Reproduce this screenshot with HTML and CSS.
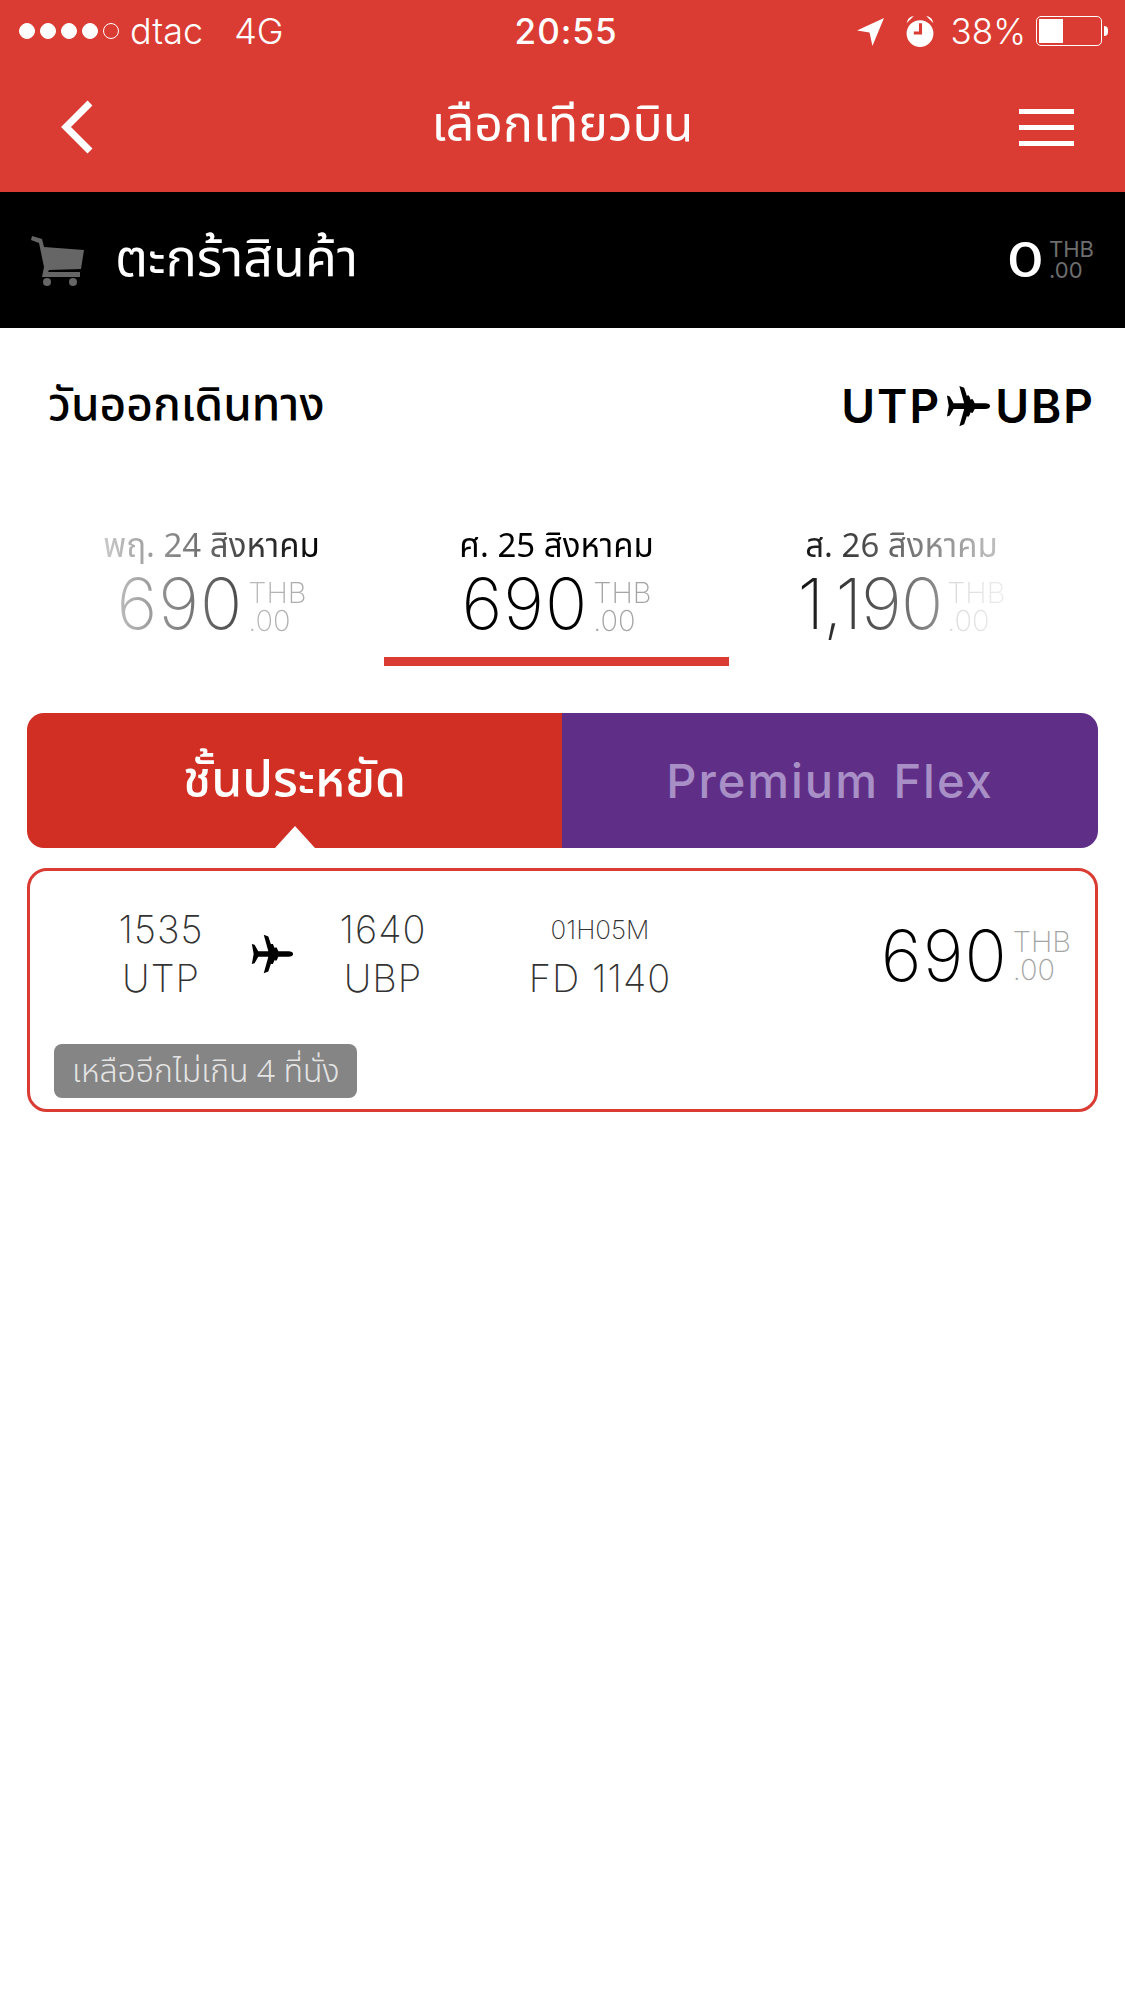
FILE: index.html
```html
<!DOCTYPE html>
<html lang="th">
<head>
    <meta charset="UTF-8">
    <meta name="viewport" content="width=device-width, initial-scale=1.0">
    <title>เลือกเทียวบิน</title>
    <link rel="stylesheet" href="styles.css">
</head>
<body>
    <header class="top">
        <div class="status">
            <div class="status-left">
                <span class="dots"><i></i><i></i><i></i><i></i><i class="off"></i></span>
                <span class="carrier">dtac</span>
                <span class="net">4G</span>
            </div>
            <div class="clock">20:55</div>
            <div class="status-right">
                <svg class="loc" viewBox="0 0 28 30"><path d="M28 1 L0 14 L13 16 L16 30 Z" fill="#fff"/></svg>
                <svg class="alarm" viewBox="0 0 30 32">
                    <circle cx="15" cy="18" r="13" fill="#fff"/>
                    <path d="M2 8 Q3 2 9 1 Z M28 8 Q27 2 21 1 Z" fill="#fff"/>
                    <path d="M14 8 h3 v11 h-8 v-3 h5 Z" fill="#da3c34"/>
                </svg>
                <span class="pct">38%</span>
                <span class="battery"><span class="battery-fill"></span></span>
                <span class="battery-nub"></span>
            </div>
        </div>
        <nav class="nav">
            <svg class="back" viewBox="0 0 34 54"><path d="M30 3 L6 27 L30 51" fill="none" stroke="#fff" stroke-width="7"/></svg>
            <h1 class="nav-title">เลือกเทียวบิน</h1>
            <div class="burger"><i></i><i></i><i></i></div>
        </nav>
    </header>

    <section class="cart">
        <svg class="cart-icon" viewBox="0 0 54 52">
            <path d="M1 2 L11 5 L13 13 L53 16 L50 35 L18 36 L17 38 L49 38 L49 43 L11 43 L13 33 L8 9 L0 6 Z" fill="#666"/>
            <circle cx="16" cy="48" r="4" fill="#666"/>
            <circle cx="42" cy="48" r="4" fill="#666"/>
        </svg>
        <div class="cart-title">ตะกร้าสินค้า</div>
        <div class="price price-cart">
            <span class="amount">0</span>
            <span class="cents"><span>THB</span><span>.00</span></span>
        </div>
    </section>

    <section class="route">
        <div class="route-title">วันออกเดินทาง</div>
        <div class="route-codes">
            <span>UTP</span>
            <svg class="plane plane-big" viewBox="0 0 48 48"><use href="#plane"/></svg>
            <span>UBP</span>
        </div>
    </section>

    <section class="days">
        <div class="day">
            <div class="day-label">พฤ. 24 สิงหาคม</div>
            <div class="price"><span class="amount">690</span><span class="cents"><span>THB</span><span>.00</span></span></div>
        </div>
        <div class="day day-active">
            <div class="day-label">ศ. 25 สิงหาคม</div>
            <div class="price"><span class="amount">690</span><span class="cents"><span>THB</span><span>.00</span></span></div>
        </div>
        <div class="day">
            <div class="day-label">ส. 26 สิงหาคม</div>
            <div class="price"><span class="amount amount-long">1,190</span><span class="cents"><span>THB</span><span>.00</span></span></div>
        </div>
    </section>

    <section class="tabs">
        <div class="tab tab-eco">ชั้นประหยัด<span class="notch"></span></div>
        <div class="tab tab-flex">Premium Flex</div>
    </section>

    <section class="flight">
        <div class="flight-row">
            <div class="col col-time"><div class="big">1535</div><div class="big">UTP</div></div>
            <svg class="plane plane-small" viewBox="0 0 48 48"><use href="#plane"/></svg>
            <div class="col col-time"><div class="big">1640</div><div class="big">UBP</div></div>
            <div class="col col-no"><div class="small">01H05M</div><div class="big">FD 1140</div></div>
            <div class="price price-flight"><span class="amount">690</span><span class="cents"><span>THB</span><span>.00</span></span></div>
        </div>
        <div class="seats">เหลืออีกไม่เกิน 4 ที่นั่ง</div>
    </section>

    <svg class="defs" width="0" height="0">
        <defs>
            <path id="plane" d="M47 24 C47 22 45 21 42 21 L31 21 L29 17 L27 17 L27 18 L25 13 L23 13 L23 14 L20 5 L15 3 L20 21 L9 21 L5 14 L2 13 L4 24 L2 35 L5 34 L9 27 L20 27 L15 45 L20 43 L23 34 L23 35 L25 35 L27 30 L27 31 L29 31 L31 27 L42 27 C45 27 47 26 47 24 Z"/>
        </defs>
    </svg>
</body>
</html>
```

FILE: styles.css
```css
body { margin: 0; background: #fff; color: #000; font-family: "Noto Sans", "Noto Sans Thai", "Noto Sans CJK SC", sans-serif; }
i { display: block; }

.top { height: 192px; background: #da3c34; color: #fff; }
.status { height: 62px; display: flex; align-items: center; justify-content: space-between; padding: 0 17px 0 19px; font-family: Inter, sans-serif; font-size: 35px; font-weight: 300; }
.status-left { display: flex; align-items: center; font-size: 36px; }
.dots { display: flex; gap: 5px; margin-right: 11px; }
.dots i { width: 16px; height: 16px; border-radius: 50%; background: #fff; border: 1px solid #fff; box-sizing: border-box; }
.dots i.off { background: none; }
.net { margin-left: 31px; }
.clock { margin-left: -8px; font-weight: 500; letter-spacing: 1px; }
.status-right { display: flex; align-items: center; }
.loc { width: 27px; height: 29px; margin-right: 20px; }
.alarm { width: 32px; height: 33px; margin-right: 15px; }
.pct { margin-right: 10px; }
.battery { width: 66px; height: 30px; box-sizing: border-box; border: 1px solid #fff; border-radius: 5px; padding: 2px; display: flex; }
.battery-fill { width: 24px; background: #fff; }
.battery-nub { width: 4px; height: 10px; margin-left: 2px; background: #fff; border-radius: 0 5px 5px 0; }

.nav { height: 130px; display: flex; align-items: center; padding: 0 51px 0 60px; }
.back { width: 34px; height: 54px; }
.nav-title { flex: 1; margin: -2px 0 0 12px; text-align: center; font-size: 50px; font-weight: 400; }
.burger { width: 55px; display: flex; flex-direction: column; gap: 11px; }
.burger i { height: 5px; background: #fff; }

.cart { height: 136px; background: #000; color: #fff; display: flex; align-items: center; padding: 0 31px; }
.cart-icon { width: 54px; height: 52px; margin-right: 30px; }
.cart-title { margin-top: -2px; font-size: 52px; flex: 1; }

.price { display: flex; justify-content: center; align-items: center; font-family: Inter, sans-serif; font-weight: 200; }
.amount { font-size: 70px; line-height: 70px; letter-spacing: 1px; }
.amount-long { letter-spacing: -1px; }
.cents { display: flex; flex-direction: column; margin-left: 5px; font-size: 29px; line-height: 28px; color: #a5a5a5; }
.price-cart .amount { font-size: 48px; font-weight: 500; line-height: 44px; letter-spacing: 0; transform: scaleX(1.2); transform-origin: right; }
.price-cart .cents { font-size: 22px; line-height: 21px; font-weight: 400; color: #6e6e6e; }

.route { display: flex; justify-content: space-between; align-items: center; height: 156px; padding: 0 30px 0 48px; }
.route-title { font-size: 46px; font-weight: 500; }
.route-codes { display: flex; align-items: center; font-family: Inter, sans-serif; font-size: 46px; font-weight: 600; letter-spacing: 2px; }
.plane-big { width: 46px; height: 46px; margin: 0 4px; }

.days { display: flex; padding: 0 39px; height: 182px; -webkit-mask-image: linear-gradient(90deg, rgba(0,0,0,.2) 100px, #000 320px, #000 780px, rgba(0,0,0,.2) 1010px); mask-image: linear-gradient(90deg, rgba(0,0,0,.2) 100px, #000 320px, #000 780px, rgba(0,0,0,.2) 1010px); }
.day { width: 345px; height: 182px; box-sizing: border-box; padding-top: 39px; }
.day-active { border-bottom: 9px solid #da3c34; }
.day-label { text-align: center; font-size: 33px; line-height: 44px; }
.day .price { margin-top: 2px; }
.day .cents { margin-top: 6px; }

.tabs { display: flex; height: 135px; margin: 47px 27px 0; border-radius: 17px; overflow: hidden; }
.tab { display: flex; align-items: center; justify-content: center; position: relative; }
.tab-eco { flex: 0 0 535px; background: #d12e24; color: #fff; font-size: 50px; font-weight: 500; }
.tab-flex { flex: 1; background: #5f2f88; color: #a88fc6; font-family: Inter, sans-serif; font-weight: 500; letter-spacing: 2px; font-size: 47px; }
.notch { position: absolute; left: 248px; bottom: 0; width: 0; height: 0; border-left: 20px solid transparent; border-right: 20px solid transparent; border-bottom: 22px solid #fff; }

.flight { margin: 20px 27px 0; height: 244px; box-sizing: border-box; border: 3px solid #da3c34; border-radius: 20px; padding: 32px 0 0 24px; }
.flight-row { display: flex; align-items: center; height: 102px; padding-left: 12px; color: #333; font-family: Inter, sans-serif; font-weight: 200; }
.col { text-align: center; }
.col-time { width: 190px; }
.col-no { width: 190px; margin-left: 27px; }
.big { font-size: 38px; line-height: 49px; letter-spacing: 1px; }
.small { font-size: 26px; line-height: 49px; font-weight: 200; }
.plane-small { width: 44px; height: 44px; margin: 0 -6px; }
.price-flight { margin-top: 4px; margin-left: auto; margin-right: 24px; color: #000; }
.seats { display: inline-block; margin-top: 39px; height: 54px; line-height: 52px; padding: 0 18px; background: #858585; border-radius: 8px; color: #e4e4e4; font-size: 32px; font-weight: 300; }

.defs { display: block; }
```
